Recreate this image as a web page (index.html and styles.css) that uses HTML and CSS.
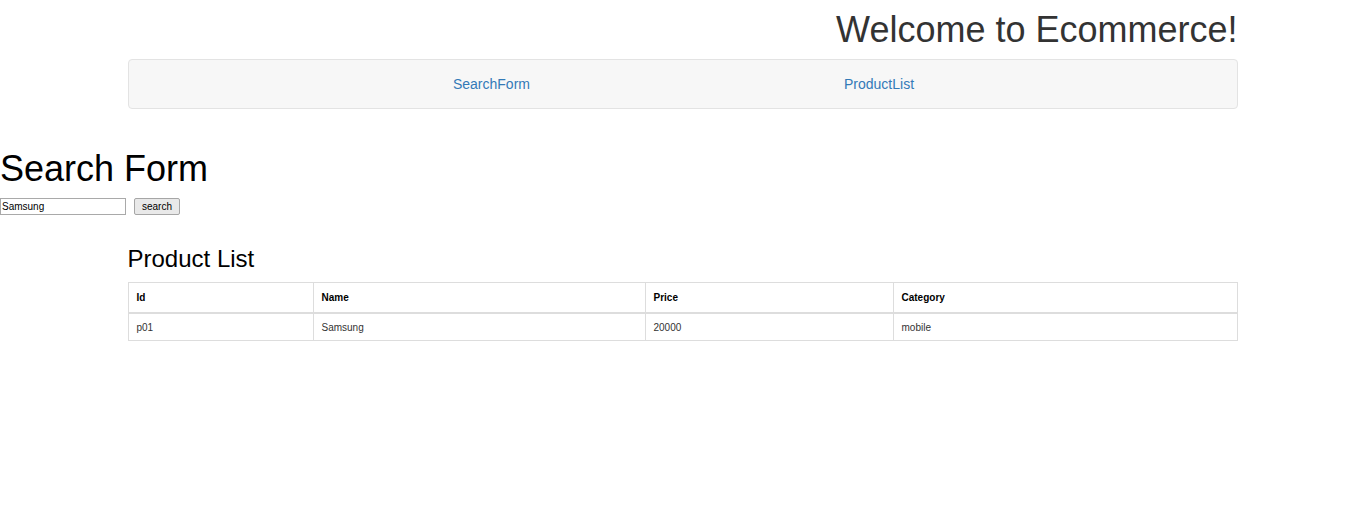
FILE: index.html
```html
<!DOCTYPE html>
<html>
<head>
<meta charset="utf-8">
<link rel="stylesheet" href="styles.css">
</head>
<body>
<div class="container">
  <h1 class="welcome">Welcome to Ecommerce!</h1>
  <nav class="navbar">
    <a href="#" class="nav-link">SearchForm</a>
    <a href="#" class="nav-link">ProductList</a>
  </nav>
</div>
<section class="search">
  <h1 class="search-title">Search Form</h1>
  <form class="search-form">
    <input type="text" class="search-input" value="Samsung">
    <button type="button" class="search-btn">search</button>
  </form>
</section>
<div class="container">
  <h3 class="list-title">Product List</h3>
  <table class="table">
    <thead>
      <tr><th class="c-id">Id</th><th class="c-name">Name</th><th class="c-price">Price</th><th>Category</th></tr>
    </thead>
    <tbody>
      <tr><td>p01</td><td>Samsung</td><td>20000</td><td>mobile</td></tr>
    </tbody>
  </table>
</div>
</body>
</html>
```
FILE: styles.css
```css
html, body {
  margin: 0;
  padding: 0;
  background: #fff;
  font-family: "Liberation Sans", Arial, sans-serif;
  font-size: 14px;
  color: #333;
}
.container {
  width: 1110px;
  margin: 0 auto;
  padding-left: 1px;
}
.welcome {
  margin: 10px 0 9px;
  font-size: 36px;
  font-weight: 500;
  line-height: 1.1;
  text-align: right;
  color: #333;
}
.navbar {
  height: 48px;
  background: #f7f7f7;
  border: 1px solid #e3e3e3;
  border-radius: 4px;
  display: flex;
  justify-content: center;
  align-items: center;
  gap: 314px;
  padding-left: 2px;
}
.nav-link {
  color: #337ab7;
  text-decoration: none;
  font-size: 14px;
}
.search {
  margin-top: 40px;
}
.search-title {
  margin: 0 0 10px;
  font-size: 36px;
  font-weight: normal;
  line-height: 1.1;
  color: #000;
}
.search-form {
  display: flex;
  align-items: center;
  gap: 8px;
  margin: 0;
}
.search-input {
  box-sizing: border-box;
  width: 126px;
  height: 17px;
  margin: 0;
  padding: 0 1px;
  border: 1px solid #a9a9a9;
  font-family: "Liberation Sans", Arial, sans-serif;
  font-size: 10px;
  color: #000;
}
.search-btn {
  box-sizing: border-box;
  width: 46px;
  height: 17px;
  margin: 0;
  padding: 0;
  border: 1px solid #a6a6a6;
  background: #e9e9e9;
  border-radius: 2px;
  font-family: "Liberation Sans", Arial, sans-serif;
  font-size: 10px;
  color: #000;
}
.list-title {
  margin: 31px 0 9px;
  font-size: 24px;
  font-weight: normal;
  line-height: 1.1;
  color: #000;
}
.table {
  width: 1110px;
  border-collapse: collapse;
  font-size: 10px;
  color: #333;
}
.table th, .table td {
  border: 1px solid #ddd;
  padding: 8px;
  line-height: 14px;
  text-align: left;
}
.table th {
  font-weight: bold;
  color: #000;
  padding-top: 8px;
  padding-bottom: 7px;
  border-bottom: 2px solid #ddd;
}
.table td {
  padding-top: 7px;
  padding-bottom: 5px;
}
.c-id { width: 168px; }
.c-name { width: 315px; }
.c-price { width: 231px; }
```
